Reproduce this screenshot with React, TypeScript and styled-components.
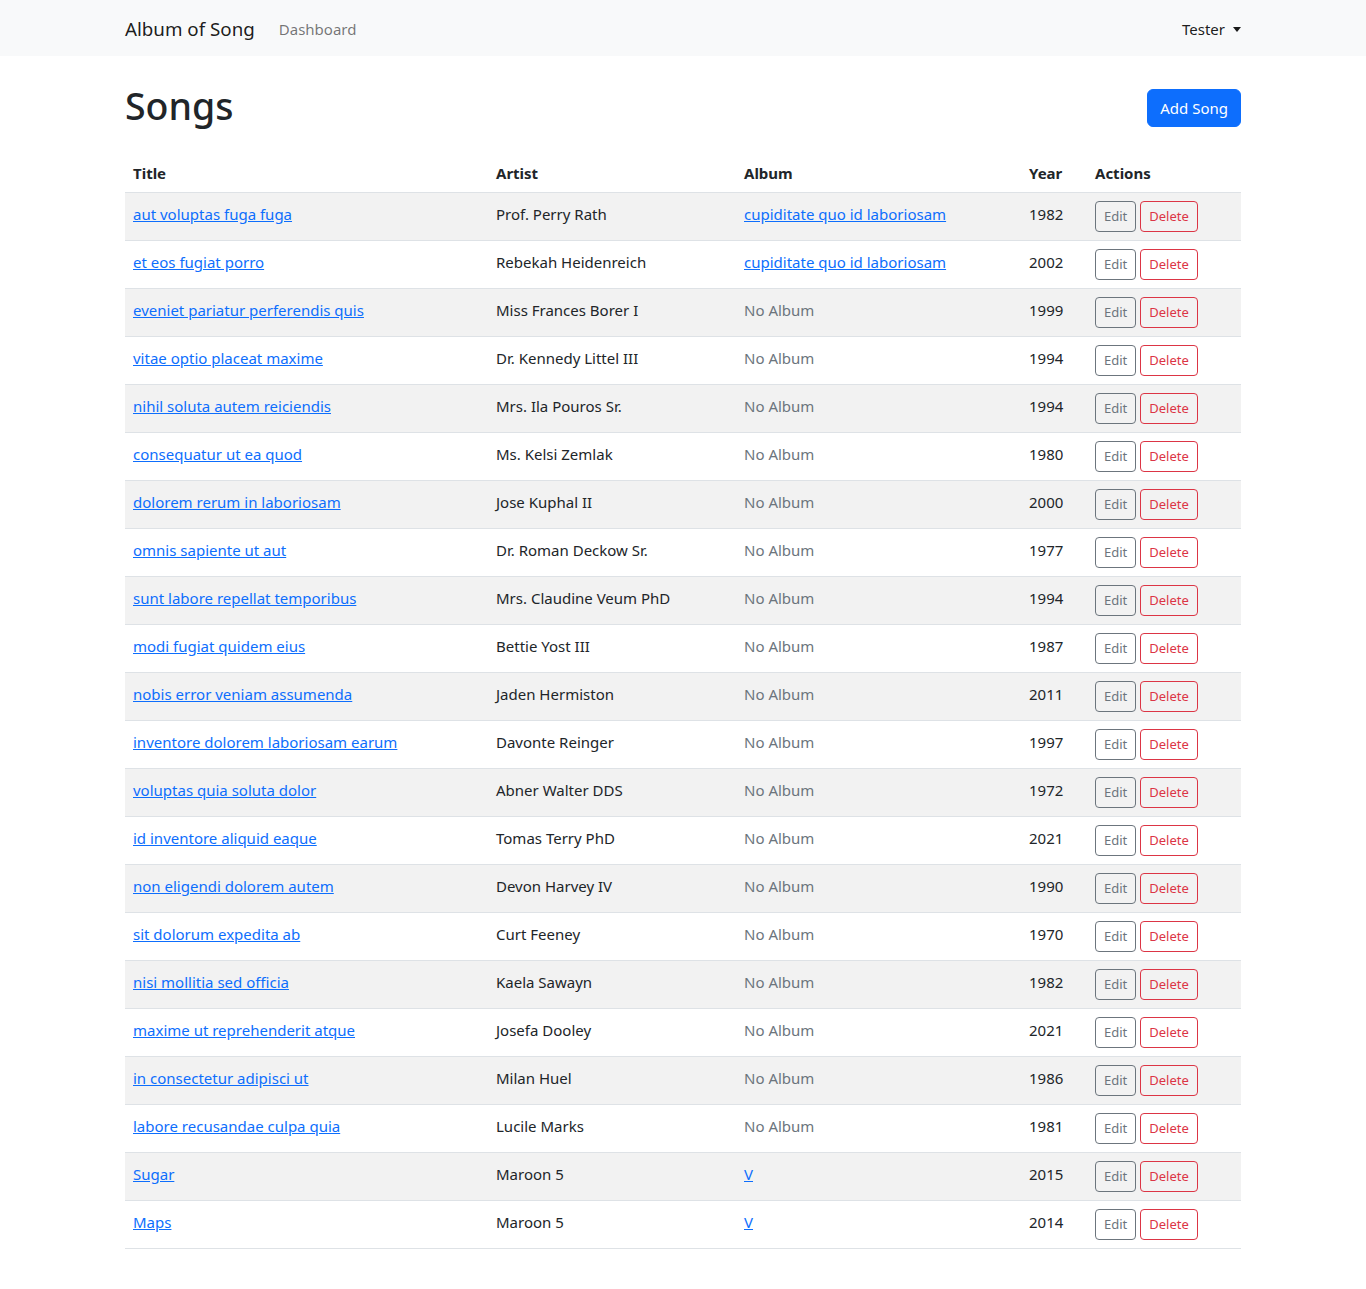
import React from "react";
import styled, { createGlobalStyle } from "styled-components";

const Global = createGlobalStyle`
  * { box-sizing: border-box; }
  body {
    margin: 0;
    font-family: "Noto Sans", "Open Sans", sans-serif;
    font-size: 15px;
    line-height: 24px;
    color: #212529;
    background: #fff;
  }
`;

const Navbar = styled.nav`
  background: #f8f9fa;
  height: 56px;
  display: flex;
  align-items: center;
`;

const Container = styled.div`
  width: 1116px;
  margin: 0 auto;
`;

const NavInner = styled(Container)`
  display: flex;
  align-items: center;
  padding-top: 2px;
`;

const Brand = styled.a`
  font-size: 18.75px;
  color: rgba(0, 0, 0, 0.9);
  text-decoration: none;
  margin-right: 16px;
  line-height: 30px;
`;

const NavLink = styled.a`
  color: rgba(0, 0, 0, 0.55);
  text-decoration: none;
  padding: 8px;
`;

const UserMenu = styled.a`
  margin-left: auto;
  color: rgba(0, 0, 0, 0.9);
  text-decoration: none;
  padding: 8px 0;
  display: flex;
  align-items: center;
  &::after {
    content: "";
    display: inline-block;
    margin-left: 8px;
    border-top: 5px solid rgba(0, 0, 0, 0.9);
    border-left: 4px solid transparent;
    border-right: 4px solid transparent;
  }
`;

const Header = styled.div`
  display: flex;
  justify-content: space-between;
  align-items: center;
  margin-top: 24px;
  margin-bottom: 16px;
`;

const Title = styled.h1`
  font-size: 37.5px;
  font-weight: 500;
  line-height: 48px;
  margin: 2px 0 6px;
`;

const PrimaryButton = styled.button`
  font-family: inherit;
  font-size: 15px;
  line-height: 24px;
  padding: 6px 12px;
  color: #fff;
  background: #0d6efd;
  border: 1px solid #0d6efd;
  border-radius: 6px;
`;

const Table = styled.table`
  width: 100%;
  border-collapse: collapse;
  vertical-align: top;
  margin-bottom: 16px;
`;

const Th = styled.th<{ $w: number }>`
  width: ${(p) => p.$w}px;
  text-align: left;
  font-weight: 700;
  padding: 9px 8px 7px;
  border-bottom: 1px solid #dee2e6;
`;

const Row = styled.tr<{ $striped: boolean }>`
  background: ${(p) => (p.$striped ? "#f2f2f2" : "#fff")};
`;

const Td = styled.td`
  padding: 9px 8px 7px;
  border-bottom: 1px solid #dee2e6;
  vertical-align: top;
`;

const ActionsTd = styled(Td)`
  padding: 8px;
`;

const Link = styled.a`
  color: #0d6efd;
  text-decoration: underline;
`;

const Muted = styled.span`
  color: #6c757d;
`;

const SmallButton = styled.button<{ $variant: "secondary" | "danger" }>`
  font-family: inherit;
  font-size: 13px;
  line-height: 21px;
  padding: 4px 8px;
  background: transparent;
  border: 1px solid ${(p) => (p.$variant === "danger" ? "#dc3545" : "#6c757d")};
  color: ${(p) => (p.$variant === "danger" ? "#dc3545" : "#6c757d")};
  border-radius: 4px;
  margin-right: 4px;
`;

type Song = { title: string; artist: string; album: string | null; year: number };

const songs: Song[] = [
  { title: "aut voluptas fuga fuga", artist: "Prof. Perry Rath", album: "cupiditate quo id laboriosam", year: 1982 },
  { title: "et eos fugiat porro", artist: "Rebekah Heidenreich", album: "cupiditate quo id laboriosam", year: 2002 },
  { title: "eveniet pariatur perferendis quis", artist: "Miss Frances Borer I", album: null, year: 1999 },
  { title: "vitae optio placeat maxime", artist: "Dr. Kennedy Littel III", album: null, year: 1994 },
  { title: "nihil soluta autem reiciendis", artist: "Mrs. Ila Pouros Sr.", album: null, year: 1994 },
  { title: "consequatur ut ea quod", artist: "Ms. Kelsi Zemlak", album: null, year: 1980 },
  { title: "dolorem rerum in laboriosam", artist: "Jose Kuphal II", album: null, year: 2000 },
  { title: "omnis sapiente ut aut", artist: "Dr. Roman Deckow Sr.", album: null, year: 1977 },
  { title: "sunt labore repellat temporibus", artist: "Mrs. Claudine Veum PhD", album: null, year: 1994 },
  { title: "modi fugiat quidem eius", artist: "Bettie Yost III", album: null, year: 1987 },
  { title: "nobis error veniam assumenda", artist: "Jaden Hermiston", album: null, year: 2011 },
  { title: "inventore dolorem laboriosam earum", artist: "Davonte Reinger", album: null, year: 1997 },
  { title: "voluptas quia soluta dolor", artist: "Abner Walter DDS", album: null, year: 1972 },
  { title: "id inventore aliquid eaque", artist: "Tomas Terry PhD", album: null, year: 2021 },
  { title: "non eligendi dolorem autem", artist: "Devon Harvey IV", album: null, year: 1990 },
  { title: "sit dolorum expedita ab", artist: "Curt Feeney", album: null, year: 1970 },
  { title: "nisi mollitia sed officia", artist: "Kaela Sawayn", album: null, year: 1982 },
  { title: "maxime ut reprehenderit atque", artist: "Josefa Dooley", album: null, year: 2021 },
  { title: "in consectetur adipisci ut", artist: "Milan Huel", album: null, year: 1986 },
  { title: "labore recusandae culpa quia", artist: "Lucile Marks", album: null, year: 1981 },
  { title: "Sugar", artist: "Maroon 5", album: "V", year: 2015 },
  { title: "Maps", artist: "Maroon 5", album: "V", year: 2014 },
];

export default function App() {
  return (
    <>
      <Global />
      <Navbar>
        <NavInner>
          <Brand href="#">Album of Song</Brand>
          <NavLink href="#">Dashboard</NavLink>
          <UserMenu href="#">Tester</UserMenu>
        </NavInner>
      </Navbar>
      <Container>
        <Header>
          <Title>Songs</Title>
          <PrimaryButton>Add Song</PrimaryButton>
        </Header>
        <Table>
          <thead>
            <tr>
              <Th $w={363}>Title</Th>
              <Th $w={248}>Artist</Th>
              <Th $w={285}>Album</Th>
              <Th $w={66}>Year</Th>
              <Th $w={154}>Actions</Th>
            </tr>
          </thead>
          <tbody>
            {songs.map((s, i) => (
              <Row key={i} $striped={i % 2 === 0}>
                <Td>
                  <Link href="#">{s.title}</Link>
                </Td>
                <Td>{s.artist}</Td>
                <Td>{s.album ? <Link href="#">{s.album}</Link> : <Muted>No Album</Muted>}</Td>
                <Td>{s.year}</Td>
                <ActionsTd>
                  <SmallButton $variant="secondary">Edit</SmallButton>
                  <SmallButton $variant="danger">Delete</SmallButton>
                </ActionsTd>
              </Row>
            ))}
          </tbody>
        </Table>
      </Container>
    </>
  );
}
